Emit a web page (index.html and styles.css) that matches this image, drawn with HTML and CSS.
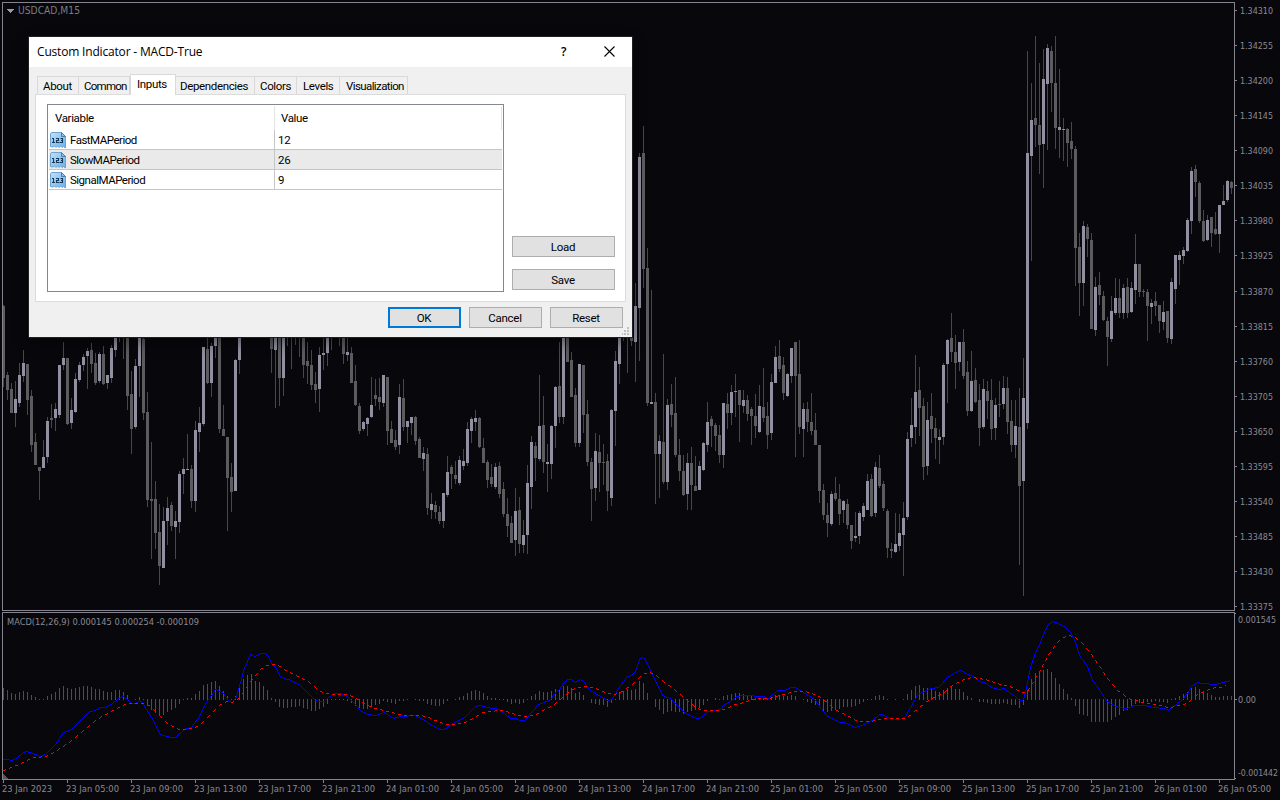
FILE: index.html
```html
<!DOCTYPE html>
<html lang="en">
<head>
<meta charset="utf-8">
<title>USDCAD,M15</title>
<link rel="stylesheet" href="styles.css">
</head>
<body>
<main class="terminal">
  <svg class="chart" id="chart" width="1280" height="800" viewBox="0 0 1280 800">
    <path class="wick" id="wicks"/>
    <path class="bear" id="bears"/>
    <path class="bull" id="bulls"/>
    <path class="hist" id="hist"/>
    <path class="macd" id="macd"/>
    <path class="signal" id="signal"/>
    <path class="frame" d="M2 2h1233v1H2zM2 2h1v609H2zM2 610h1233v1H2zM2 612h1233v1H2zM2 612h1v168H2zM2 779h1233v1H2zM1234 2h1v609h-1zM1234 612h1v168h-1z"/>
    <path class="frame" id="ticks"/>
    <path class="menu-arrow" d="M6 9h8l-4 4z"/>
    <path class="corner" d="M3 774l5 5H3z"/>
    <g id="labels"></g>
  </svg>

  <section class="dialog">
    <header class="titlebar">
      <h1 class="title">Custom Indicator - MACD-True</h1>
      <span class="help">?</span>
      <svg class="close" width="11" height="11" viewBox="0 0 11 11"><path d="M.5.5l10 10M10.5.5l-10 10"/></svg>
    </header>
    <nav class="tabs">
      <span class="tab tab-about">About</span>
      <span class="tab tab-common">Common</span>
      <span class="tab tab-inputs active">Inputs</span>
      <span class="tab tab-deps">Dependencies</span>
      <span class="tab tab-colors">Colors</span>
      <span class="tab tab-levels">Levels</span>
      <span class="tab tab-vis">Visualization</span>
    </nav>
    <div class="page">
      <div class="list">
        <div class="row head"><span class="var">Variable</span><span class="val">Value</span></div>
        <div class="row"><span class="var"><svg class="icon" width="16" height="16"><use href="#num"/></svg>FastMAPeriod</span><span class="val">12</span></div>
        <div class="row alt"><span class="var"><svg class="icon" width="16" height="16"><use href="#num"/></svg>SlowMAPeriod</span><span class="val">26</span></div>
        <div class="row"><span class="var"><svg class="icon" width="16" height="16"><use href="#num"/></svg>SignalMAPeriod</span><span class="val">9</span></div>
      </div>
      <div class="side">
        <button class="btn wide">Load</button>
        <button class="btn wide">Save</button>
      </div>
    </div>
    <footer class="actions">
      <button class="btn primary">OK</button>
      <button class="btn">Cancel</button>
      <button class="btn">Reset</button>
    </footer>
    <svg class="grip" width="8" height="8" viewBox="0 0 8 8"><path d="M6 0h2v2H6zM3 3h2v2H3zM6 3h2v2H6zM1 6h1v2H1zM3 6h2v2H3zM6 6h2v2H6z"/></svg>
  </section>

  <svg class="defs" width="0" height="0">
    <defs>
      <linearGradient id="sheet" x1="0" y1="0" x2="1" y2="1"><stop offset="0" stop-color="#c3e0f8"/><stop offset="1" stop-color="#6aaee6"/></linearGradient>
      <symbol id="num" viewBox="0 0 16 16">
        <path d="M1.5.5h10l4 4v11.500l-2-1.500-1.500 1-1.500-1.500-1.500 1.500-1.500-1.500-1.500 1.500-1.500-1.500-1.500 1-2.500-.5V2z" fill="url(#sheet)" stroke="#6ba4d2"/>
        <path d="M11.500.5v4h4z" fill="#8fc1ec" stroke="#4a80b0"/>
        <path d="M2 6.500h1.500v4M2 10.500h3M6 6.500h2.500v2h-2v2h3M10.500 6.500h2v4h-2.500M11 8.500h2" fill="none" stroke="#153a5c" stroke-width="1.100"/>
      </symbol>
    </defs>
  </svg>
</main>
<script src="chart.js"></script>
</body>
</html>
```

FILE: styles.css
```css
body { margin: 0; background: #08070c; overflow: hidden; }
.terminal { position: relative; width: 1280px; height: 800px; background: #08070c; overflow: hidden; }
.chart { display: block; shape-rendering: crispEdges; }
.defs { position: absolute; }
.wick { fill: #48484a; }
.bear { fill: #5c5c5f; }
.bull { fill: #9090a0; }
.hist { fill: #088008; }
.macd { fill: #0000ff; }
.signal { fill: #ff0000; }
.frame { fill: #85848e; }
.menu-arrow { fill: #9a99a2; }
.corner { fill: #55555c; }
.label { fill: #8b8a93; font: 9.500px "DejaVu Sans Condensed", "DejaVu Sans", sans-serif; }
.symbol { fill: #7d7d80; font-size: 10px; }

.dialog {
  position: absolute; left: 29px; top: 37px; width: 603px; height: 300px;
  background: #f0f0f0; color: #000; box-sizing: border-box;
  box-shadow: 0 0 0 1px #202022, 0 5px 14px rgba(0, 0, 0, .45);
  font: 11.5px/19px Roboto, "Liberation Sans", sans-serif; letter-spacing: -.35px;
}
.titlebar { display: flex; align-items: center; height: 30px; padding: 0 17px 0 8px; background: #fff; }
.title { flex: 1; margin: 0; font: 12px/30px "Open Sans", sans-serif; letter-spacing: -.18px; }
.help { font: 600 12px/28px "Open Sans", sans-serif; margin-right: 38px; }
.close { fill: none; stroke: #000; stroke-width: 1.100; margin-bottom: 1px; }

.tabs { display: flex; align-items: flex-end; height: 27px; padding-left: 8px; }
.tab { box-sizing: border-box; height: 18px; border: 1px solid #d9d9d9; border-width: 1px 1px 0 0; white-space: nowrap; }
.tab-about { width: 42px; padding-left: 5px; border-left-width: 1px; }
.tab-common { width: 51px; padding-left: 5px; letter-spacing: -.75px; }
.tab-inputs { width: 46px; padding-left: 6px; }
.tab-deps { width: 79px; padding-left: 4px; }
.tab-colors { width: 42px; padding-left: 5px; }
.tab-levels { width: 43px; padding-left: 6px; }
.tab-vis { width: 68px; padding-left: 6px; letter-spacing: -.6px; }
.active { height: 21px; margin-bottom: -1px; border-left-width: 1px; background: #fff; z-index: 1; }

.page { display: flex; box-sizing: border-box; width: 591px; height: 208px; margin-left: 6px; padding: 9px 0 0 11px; background: #fff; border: 1px solid #dcdcdc; }
.list { box-sizing: border-box; width: 457px; height: 188px; padding: 1px; border: 1px solid #828790; }
.row { display: flex; box-sizing: border-box; height: 20px; border-bottom: 1px solid #c6c6c6; line-height: 21px; letter-spacing: -.5px; }
.var { display: flex; align-items: flex-start; box-sizing: border-box; width: 226px; padding-left: 1px; border-right: 1px solid #c6c6c6; }
.val { flex: 1; padding-left: 3px; letter-spacing: -.1px; }
.icon { margin: 2px 4px 0 0; }
.alt { background: #eaeaea; }
.head { height: 24px; line-height: 24px; border: 0; letter-spacing: -.35px; }
.head .var { padding-left: 6px; border-color: #e5e5e5; }
.head .val { padding-left: 6px; border-right: 1px solid #e5e5e5; letter-spacing: -.35px; }
.side { display: flex; flex-direction: column; justify-content: flex-end; gap: 12px; height: 186px; margin-left: 8px; }
.btn { box-sizing: border-box; width: 73px; height: 21px; padding: 1px 1px 0 0; background: #e1e1e1; border: 1px solid #adadad; border-radius: 0; color: #000; font: inherit; letter-spacing: -.25px; line-height: 19px; }
.wide { width: 103px; }
.primary { border: 2px solid #0078d7; line-height: 17px; }
.actions { display: flex; justify-content: flex-end; gap: 8px; padding: 5px 9px 0 0; }
.grip { position: absolute; right: 3px; bottom: 2px; fill: #bfbfbf; shape-rendering: crispEdges; }
```

FILE: chart.js
```js
// Candles, four pixels apart: high, body top, body bottom, low (screen y); u = bullish, d = bearish.
const candles = `
305 306 378 387 d,372 375 390 400 d,383 389 413 413 d,381 399 413 427 u,363 375 403 407 u,350 363 376 382 u,364 364 400 415 d,390 396 445 452 d,
433 442 465 465 d,467 467 471 500 d,440 457 468 468 u,417 421 457 463 u,404 418 420 428 d,403 409 418 431 u,365 365 415 418 u,342 358 365 370 u,
358 358 424 425 d,398 410 423 429 u,373 379 412 413 u,362 365 380 382 u,354 357 365 371 u,348 351 356 389 u,343 350 364 373 d,353 363 383 385 d,
352 354 381 383 u,346 354 384 385 d,375 375 383 389 u,345 348 378 383 u,320 330 350 357 u,310 320 330 342 d,310 320 330 359 u,310 330 396 410 d,
371 394 429 454 d,359 366 427 429 u,330 338 366 397 u,330 339 413 420 d,392 412 500 507 d,442 499 501 559 d,481 499 533 549 d,504 532 566 585 d,
507 521 568 568 u,497 508 521 545 u,502 505 526 531 d,511 521 527 559 u,471 474 522 533 u,458 469 474 494 u,434 469 470 470 u,465 469 501 508 d,
421 430 501 512 u,407 423 432 452 u,347 347 424 426 u,330 349 383 384 d,343 346 383 397 u,315 320 346 358 u,315 320 429 433 d,405 429 436 436 d,
437 437 478 531 d,463 477 492 512 d,359 360 491 491 u,310 320 360 374 u,300 305 310 320 u,300 305 310 320 d,300 305 310 320 u,300 305 310 320 d,
300 305 310 320 u,300 305 310 320 d,300 305 310 320 u,310 320 349 373 d,310 320 350 408 u,310 320 378 406 d,310 320 378 396 u,310 320 330 346 d,
310 320 330 369 d,310 320 330 345 u,310 320 330 357 d,310 320 365 378 d,342 361 366 384 d,350 365 385 390 d,372 384 390 403 d,347 355 389 412 u,
320 353 355 370 u,310 320 353 366 u,310 320 330 350 u,300 305 310 320 d,310 320 330 346 d,310 320 354 364 d,320 352 355 361 u,347 353 383 383 d,
365 381 405 406 d,403 406 431 434 d,421 422 429 431 u,417 418 424 436 u,377 405 417 418 u,379 395 399 406 d,378 397 402 410 d,375 375 403 407 u,
377 377 431 445 d,421 429 443 443 d,430 440 447 450 d,384 397 445 454 u,379 398 427 431 d,421 421 427 443 u,417 417 423 435 u,416 417 441 445 d,
437 439 458 458 d,447 453 459 471 u,448 454 508 515 d,493 504 510 519 u,501 505 512 519 d,506 512 521 524 d,493 493 521 528 u,456 472 495 497 u,
465 467 474 489 d,461 475 479 484 d,456 460 483 485 u,449 461 466 470 u,422 429 463 466 u,417 419 431 443 u,410 418 422 431 u,417 418 447 448 d,
438 448 463 463 d,460 462 480 488 d,464 477 484 487 d,463 467 487 489 u,462 466 494 498 d,482 489 514 517 d,498 514 526 537 d,516 523 543 543 d,
488 511 540 556 u,497 510 544 553 d,520 535 545 553 u,465 483 535 554 u,436 442 487 509 u,442 446 458 481 d,375 426 459 461 u,396 425 462 473 d,
444 462 464 492 u,425 426 464 479 u,386 387 426 448 u,342 386 417 423 d,330 338 417 424 u,310 320 362 362 d,352 360 397 397 d,388 395 443 447 d,
364 364 443 447 u,365 365 415 433 d,400 414 462 466 d,458 462 489 521 d,433 451 488 501 u,435 452 463 492 d,444 462 463 485 d,454 461 491 511 d,
409 410 498 506 u,351 361 411 446 u,310 320 364 384 u,310 320 330 341 u,310 320 330 373 d,319 330 341 346 d,283 306 342 382 u,153 157 308 361 u,
126 153 269 288 d,248 268 403 406 d,290 402 404 404 u,393 402 454 504 d,435 441 454 498 u,354 442 482 484 d,399 405 482 490 u,384 404 415 427 d,
377 413 455 457 d,439 455 471 481 d,455 471 495 496 d,453 463 494 510 u,447 463 485 510 d,456 486 491 491 d,461 466 490 490 u,442 443 470 471 u,
402 422 445 452 u,416 419 426 447 d,423 425 436 451 d,425 435 455 463 d,403 403 455 468 u,393 404 413 429 d,385 392 413 425 u,374 391 392 417 u,
390 390 405 442 d,390 400 406 413 u,395 400 414 421 d,407 409 416 445 d,394 416 426 438 d,385 406 432 433 u,368 407 418 422 d,402 416 435 449 d,
374 382 433 440 u,346 357 383 383 u,340 356 369 372 d,357 365 393 400 d,373 374 396 397 u,348 348 376 383 u,342 342 376 457 d,340 374 427 434 d,
403 409 429 457 u,402 409 422 432 d,393 422 431 435 d,413 430 445 445 d,445 445 491 503 d,484 490 515 520 d,503 515 523 537 d,491 494 524 526 u,
477 493 499 501 d,484 499 514 525 d,500 501 510 523 u,499 504 525 529 d,525 525 541 549 d,512 536 538 542 u,511 513 536 544 u,503 506 517 521 u,
474 481 510 510 u,474 479 516 517 d,462 467 513 517 u,455 468 486 488 d,481 484 508 511 d,509 511 548 558 d,543 549 551 558 d,513 544 552 553 u,
514 533 546 551 u,502 518 535 576 u,432 439 517 520 u,398 425 438 447 u,355 392 427 444 u,367 390 408 436 d,398 406 467 480 d,402 420 466 475 u,
393 416 429 443 d,418 428 438 459 d,429 437 440 464 u,363 365 437 445 u,339 340 364 403 u,313 338 352 362 d,335 352 363 389 d,342 342 362 371 u,
329 342 376 379 d,361 372 411 416 d,351 381 411 412 u,368 380 402 403 d,384 400 428 446 d,379 389 427 429 u,381 391 401 419 d,379 400 429 440 d,
398 405 428 440 u,381 404 405 417 d,376 388 404 409 u,377 388 422 434 d,400 421 445 452 d,400 426 445 458 u,388 427 486 565 d,358 398 481 596 u,
51 153 423 429 u,83 120 156 261 u,36 118 125 147 d,63 125 145 174 d,49 79 144 188 u,44 48 84 150 u,46 51 83 112 d,36 83 128 149 d,
69 127 130 158 u,118 129 130 161 u,128 129 143 167 d,122 141 149 159 d,146 149 248 286 d,233 247 283 316 d,221 226 283 306 u,224 227 239 257 d,
233 240 329 329 d,277 287 330 336 u,272 285 295 305 d,291 296 320 321 d,317 321 337 366 d,296 311 339 342 u,278 298 313 315 u,279 298 313 318 d,
284 288 313 319 u,278 287 313 318 d,282 288 312 313 u,234 264 290 304 u,264 264 292 297 d,289 291 292 297 d,289 292 306 341 d,299 303 307 324 u,
292 301 306 316 d,305 305 321 333 d,301 312 322 330 u,311 311 338 343 d,278 282 339 344 u,255 255 289 304 u,251 255 260 285 u,247 250 256 264 u,
218 220 251 252 u,167 171 221 234 u,165 169 182 197 d,181 183 221 223 d,210 221 241 242 d,215 220 240 241 u,217 217 233 247 d,212 229 234 235 d,
205 205 234 253 u,185 201 205 205 u,180 181 200 202 u,181 182 188 194 d`.trim().split(',');

// MACD histogram bar heights in pixels, one per candle.
const hist = [
12,10,7,6,8,9,8,5,3,1,1,4,6,8,12,14,12,11,12,13,14,14,13,11,11,9,8,8,10,10,8,5,0,1,3,-1,-7,-11,-14,-17,
-16,-13,-11,-9,-5,1,2,2,6,9,15,16,18,19,14,9,4,1,4,12,21,25,26,19,18,14,10,2,-3,-8,-9,-9,-8,-8,-7,-9,-10,-12,-12,-10,
-8,-5,1,1,1,1,-2,-4,-7,-9,-10,-10,-8,-6,-5,-2,-3,-4,-5,-2,-2,1,0,1,-2,-2,-5,-6,-7,-7,-5,-2,0,1,3,4,7,9,10,9,
7,4,2,2,1,1,-3,-5,-4,-5,-4,1,4,6,9,8,8,9,11,11,14,14,12,7,8,5,0,-4,-5,-6,-6,-8,-4,1,8,9,11,10,11,19,
17,7,0,-8,-11,-15,-13,-12,-13,-13,-15,-13,-12,-11,-9,-6,-2,0,2,1,4,5,6,7,7,6,5,4,2,2,2,1,2,5,5,4,4,5,4,0,
1,-3,-4,-6,-8,-12,-13,-12,-11,-10,-8,-8,-8,-7,-5,-3,1,1,4,5,4,1,0,1,0,1,6,10,14,15,12,12,11,9,8,10,12,13,11,11,
8,4,2,0,-3,-3,-4,-5,-5,-5,-4,-5,-6,-6,-9,-6,10,21,27,29,30,31,28,22,16,11,6,2,-7,-15,-16,-17,-23,-23,-23,-23,-23,-21,-18,-16,
-12,-11,-8,-5,-4,-4,-3,-3,-2,-3,-3,-4,-1,2,4,6,8,12,13,11,8,7,5,3,3,4,4,4];

// Line series in thirds of a pixel, y measured from 605.  Each chunk: [x offset, x,y pairs].
const macd = [
[0, '10,464 28,464 34,467 50,460 70,443 80,438 90,441 105,449 120,454 135,449 165,419 190,382 215,373 268,319 285,317 300,307 312,307 335,298 355,279 370,274 383,282 395,295 405,295 418,287 428,293 440,314 460,347 478,384 490,390 515,398 527,397 555,370 575,366 597,334 612,302 645,254 655,256 670,264 685,286 697,291 708,274 720,233 730,197 752,149 766,153 780,146 797,146 803,150 815,175 825,187 838,212 850,219 868,223 898,238 915,256 945,285 962,290'],
[960, '12,288 20,284 40,265 65,265 85,276 105,299 120,315 145,329 165,332 193,321 220,340 240,334 285,332 310,342 330,358 360,373 372,372 395,358 432,336 465,303 480,300 515,310 530,311 545,318 572,339 590,341 600,346 612,345 655,297 680,290 692,282 708,260 718,254 730,235 742,223 755,223 767,231 782,223 790,228 810,256 840,273 862,287 875,282 900,242 922,214 935,210 946,199 958,162'],
[1920, '8,157 12,160 30,197 50,236 68,272 90,279 105,294 130,320 155,333 172,341 185,338 205,318 240,313 252,299 268,293 290,275 310,271 338,271 350,274 372,274 385,279 412,257 432,256 455,247 465,247 490,263 522,283 540,306 560,332 600,352 615,353 645,367 665,360 700,343 718,329 728,328 745,337 768,344 780,343 795,333 810,306 835,264 848,261 870,251 895,248 922,216 945,201 962,195'],
[2850, '40,199 52,208 70,214 88,229 108,235 125,248 145,253 162,251 180,266 195,273 207,286 216,286 222,275 232,231 242,186 257,141 272,112 284,80 295,58 307,48 325,54 345,68 362,82 372,102 388,150 412,184 427,225 445,250 470,287 485,297 508,307 530,310 553,301 585,301 610,307 645,311 655,315 670,305 690,290 712,266 725,245 742,232 760,235 795,238 842,227']];
const signal = [
[0, '10,497 50,480 85,462 103,457 140,454 175,434 192,421 210,408 230,394 265,364 283,349 302,337 335,320 355,307 375,297 392,295 430,295 447,302 462,316 482,334 500,351 517,363 537,373 555,373 585,368 607,352 625,333 642,315 660,297 678,290 697,291 712,284 728,265 750,229 767,210 782,193 800,180 820,179 835,182 852,194 870,202 888,210 907,221 927,233 945,248 962,258'],
[960, '20,266 40,268 70,268 90,272 108,279 125,290 148,303 165,311 182,314 200,319 218,322 235,328 270,330 305,332 325,338 345,346 362,353 380,358 398,358 415,355 432,352 450,343 470,333 488,322 505,319 540,315 558,319 577,325 595,331 612,334 630,332 650,327 668,317 687,308 703,297 720,283 738,268 757,254 777,247 795,244 812,247 830,251 847,259 865,265 883,268 900,262 920,249 937,238 953,222'],
[1920, '10,206 27,202 45,207 63,222 82,238 99,250 117,265 135,280 155,294 173,310 190,317 235,317 262,309 282,299 302,294 318,289 333,283 355,281 385,279 408,274 425,268 443,265 460,260 475,258 495,260 515,265 532,271 548,281 568,298 586,313 604,322 622,331 640,342 660,349 695,349 713,344 730,340 785,340 802,336 820,323 837,308 855,293 873,281 892,272 910,264 928,248 945,236 963,226'],
[2850, '50,220 70,217 88,219 106,224 125,230 143,235 160,241 180,245 198,254 215,263 232,259 247,236 257,218 267,202 275,186 286,165 296,149 306,132 323,112 340,97 358,91 375,97 393,112 410,131 425,149 437,167 450,187 461,202 473,220 487,237 503,255 523,270 541,282 560,286 577,292 597,296 615,299 633,302 651,308 665,308 685,301 703,297 722,285 740,270 760,259 777,252 795,247 812,247 830,241']];

const rect = (x, y, w, h) => `M${x} ${y}h${w}v${h}h${-w}z`;
const set = (id, d) => document.getElementById(id).setAttribute('d', d);

let wicks = '', bulls = '', bears = '';
candles.forEach((row, i) => {
  const [h, t, b, l, dir] = row.trim().split(' ');
  const x = 3 + 4 * i;
  wicks += rect(x, +h, 1, l - h);
  const body = rect(x - 1, +t, 3, b - t);
  if (dir === 'u') bulls += body; else bears += body;
});
set('wicks', wicks);
set('bulls', bulls);
set('bears', bears);

set('hist', hist.map((v, i) => v > 0 ? rect(3 + 4 * i, 700 - v, 1, v) : v < 0 ? rect(3 + 4 * i, 699, 1, -v) : '').join(''));

// Walks a polyline pixel by pixel; dash > 0 alternates drawn and skipped runs.
function trace(chunks, dash) {
  const pts = chunks.flatMap(([off, s]) => s.split(' ').map(p => {
    const [x, y] = p.split(',').map(Number);
    return [Math.floor((x + off) / 3), Math.floor(605 + y / 3)];
  }));
  let d = '', n = 0;
  for (let k = 1; k < pts.length; k++) {
    const [x0, y0] = pts[k - 1], [x1, y1] = pts[k];
    const steps = Math.max(Math.abs(x1 - x0), Math.abs(y1 - y0));
    for (let s = 0; s < steps; s++, n++) {
      if (dash && n % (2 * dash) >= dash) continue;
      d += rect(Math.round(x0 + (x1 - x0) * s / steps), Math.round(y0 + (y1 - y0) * s / steps), 1, 1);
    }
  }
  return d;
}
set('macd', trace(macd, 0));
set('signal', trace(signal, 3));

const labels = document.getElementById('labels');
function label(text, x, y, width, cls = '') {
  const el = document.createElementNS('http://www.w3.org/2000/svg', 'text');
  el.setAttribute('class', 'label ' + cls);
  el.setAttribute('x', x);
  el.setAttribute('y', y);
  el.setAttribute('textLength', width);
  el.setAttribute('lengthAdjust', 'spacingAndGlyphs');
  el.textContent = text;
  labels.append(el);
}

let ticks = rect(1235, 613, 1, 1) + rect(1235, 699, 2, 1) + rect(1235, 778, 1, 1);
[10, 45, 80, 115, 150, 185, 220, 255, 291, 326, 361, 396, 431, 466, 501, 536, 571, 606].forEach((y, i) => {
  ticks += rect(1235, y, 2, 1);
  label((1.3431 - i * 0.00055).toFixed(5), 1240, y + 4, 33);
});
['23 Jan 2023', '23 Jan 05:00', '23 Jan 09:00', '23 Jan 13:00', '23 Jan 17:00', '23 Jan 21:00',
 '24 Jan 01:00', '24 Jan 05:00', '24 Jan 09:00', '24 Jan 13:00', '24 Jan 17:00', '24 Jan 21:00',
 '25 Jan 01:00', '25 Jan 05:00', '25 Jan 09:00', '25 Jan 13:00', '25 Jan 17:00', '25 Jan 21:00',
 '26 Jan 01:00', '26 Jan 05:00'].forEach((t, i) => {
  ticks += rect(3 + 64 * i, 780, 1, 3);
  label(t, 2 + 64 * i, 792, i ? 53 : 50);
});
set('ticks', ticks);
label('0.001545', 1238, 623, 38);
label('0.00', 1238, 703, 18);
label('-0.001442', 1238, 776, 40);
label('USDCAD,M15', 18, 14, 62, 'symbol');
label('MACD(12,26,9) 0.000145 0.000254 -0.000109', 7, 625, 192);
```
